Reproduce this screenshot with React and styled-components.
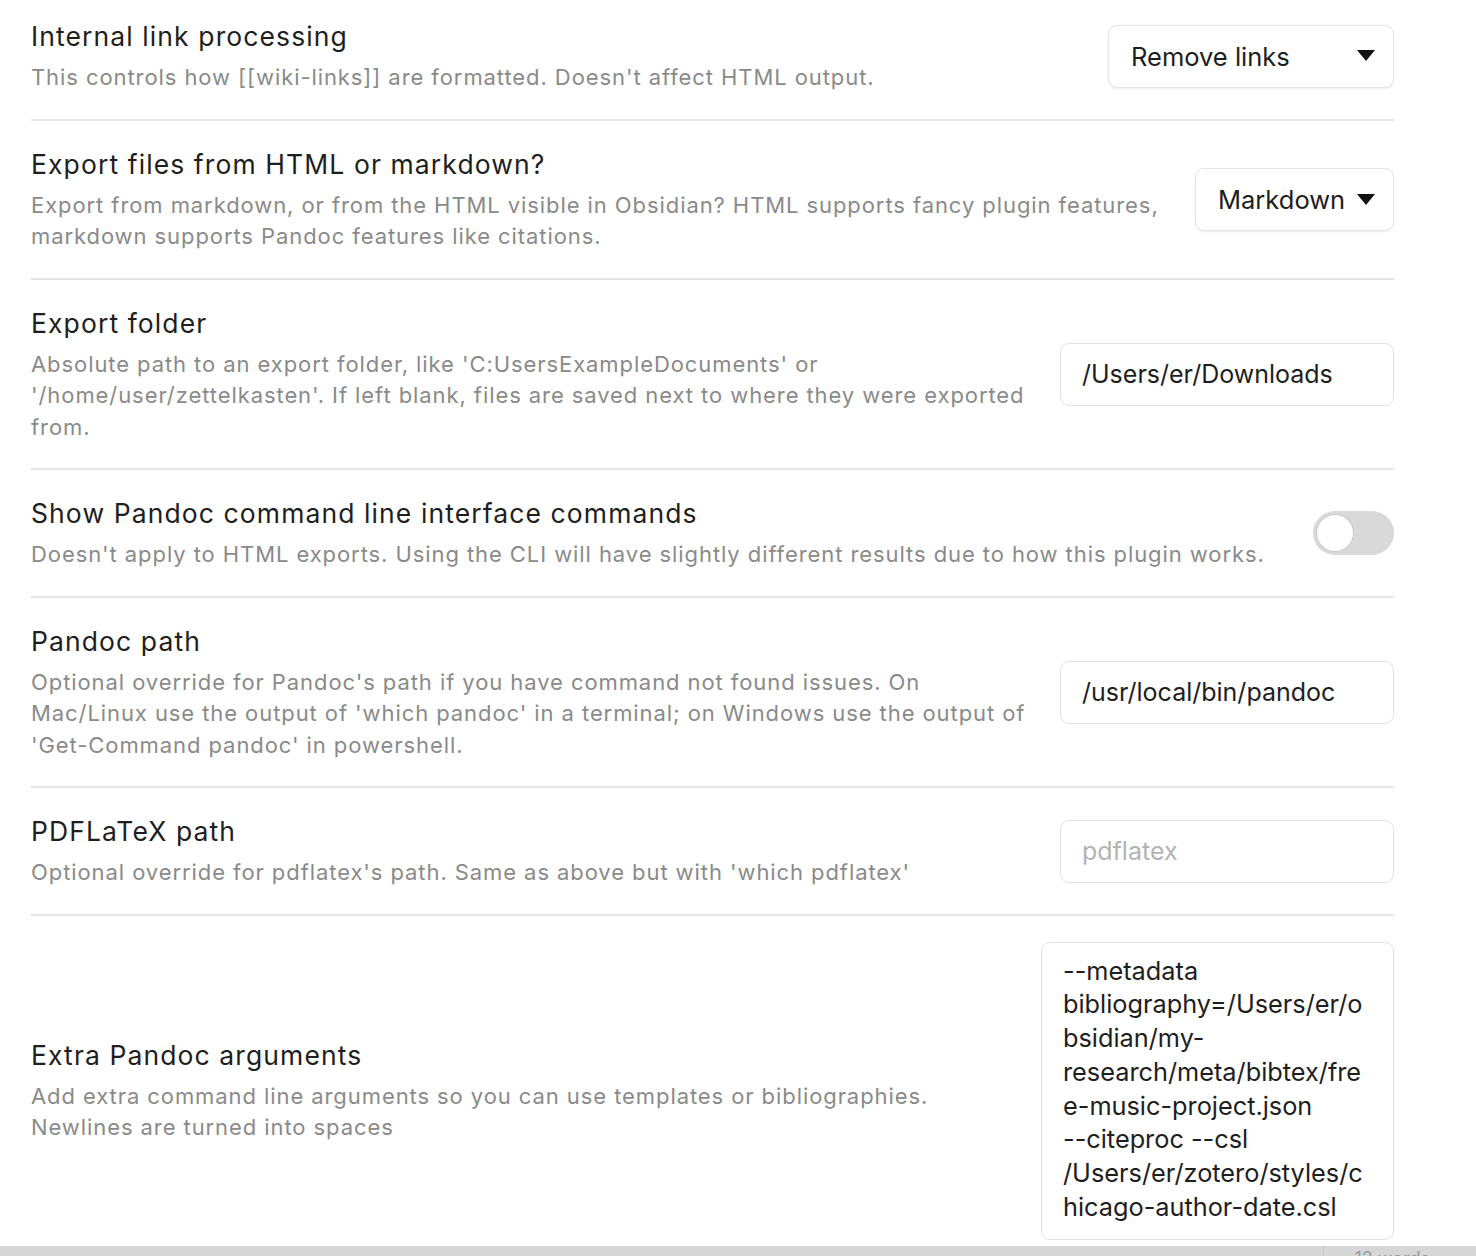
import React from 'react';
import styled, { createGlobalStyle } from 'styled-components';

const GlobalStyle = createGlobalStyle`
  html, body {
    margin: 0;
    padding: 0;
    background: #ffffff;
  }
  body {
    font-family: Inter, "Noto Sans", "Liberation Sans", sans-serif;
    color: #1f1f1f;
    -webkit-font-smoothing: antialiased;
  }
`;

const Page = styled.div`
  width: 1476px;
  height: 1256px;
  display: flex;
  flex-direction: column;
  overflow: hidden;
  background: #ffffff;
`;

const Content = styled.div`
  flex: 1;
  min-height: 0;
  overflow: hidden;
  padding: 0 82px 0 31px;
`;

const SettingItem = styled.div`
  display: flex;
  align-items: center;
  padding: 26px 0 25px;
  border-top: 2px solid #e6e6e6;

  &:first-child {
    border-top: none;
    padding-top: 19px;
  }
`;

const Info = styled.div`
  flex: 1 1 auto;
  min-width: 0;
  margin-right: 30px;
`;

const Name = styled.div`
  font-size: 26.5px;
  line-height: 34px;
  color: #1e1e1e;
  letter-spacing: 1.1px;
`;

const Description = styled.div`
  margin-top: 9px;
  font-size: 22px;
  line-height: 31.5px;
  color: #8a8a8a;
  letter-spacing: 0.92px;
  white-space: nowrap;
`;

const Control = styled.div`
  flex: 0 0 auto;
  display: flex;
  justify-content: flex-end;
`;

const Dropdown = styled.div`
  box-sizing: border-box;
  width: ${({ $width }) => $width}px;
  height: 63px;
  display: flex;
  align-items: center;
  justify-content: space-between;
  padding: 0 18px 0 22px;
  border: 1.5px solid #e4e4e4;
  border-radius: 9px;
  background: #ffffff;
  box-shadow: 0 1px 2px rgba(0, 0, 0, 0.08);
  font-size: 25.5px;
  color: #1e1e1e;
`;

const Caret = styled.svg`
  width: 18px;
  height: 11px;
  margin-top: -1px;
`;

const TextInput = styled.input`
  box-sizing: border-box;
  width: 334px;
  height: 63px;
  padding: 0 21px;
  border: 1.5px solid #e2e2e2;
  border-radius: 9px;
  background: #ffffff;
  font-family: inherit;
  font-size: 25px;
  color: #1e1e1e;
  outline: none;

  &::placeholder {
    color: #b3b3b3;
  }
`;

const Toggle = styled.div`
  box-sizing: border-box;
  width: 81px;
  height: 44px;
  border-radius: 22px;
  background: #d9d9d9;
  padding: 4px;
  display: flex;
  align-items: center;
  justify-content: ${({ $on }) => ($on ? 'flex-end' : 'flex-start')};
`;

const Knob = styled.div`
  width: 36px;
  height: 36px;
  border-radius: 50%;
  background: #ffffff;
  box-shadow: 0 0 0 1px rgba(0, 0, 0, 0.08);
`;

const TextArea = styled.textarea`
  box-sizing: border-box;
  width: 353px;
  height: 298px;
  padding: 11px 21px;
  border: 1.5px solid #e2e2e2;
  border-radius: 9px;
  background: #ffffff;
  font-family: inherit;
  font-size: 25.3px;
  line-height: 33.8px;
  color: #1e1e1e;
  white-space: pre;
  overflow: hidden;
  resize: none;
  outline: none;
`;

const StatusBar = styled.div`
  flex: 0 0 10px;
  height: 10px;
  background: #d6d6d6;
  display: flex;
  justify-content: flex-end;
  overflow: hidden;
`;

const StatusItem = styled.div`
  padding: 2px 46px 0 30px;
  font-size: 18px;
  line-height: 22px;
  color: #9a9a9a;
  border-left: 1px solid #cbcbcb;
`;

const Select = ({ value, width }) => (
  <Dropdown $width={width}>
    <span>{value}</span>
    <Caret viewBox="0 0 18 11">
      <path d="M0 0 H18 L9 11 Z" fill="#111" />
    </Caret>
  </Dropdown>
);

const Lines = ({ lines }) =>
  lines.map((line, i) => (
    <React.Fragment key={i}>
      {line}
      {i < lines.length - 1 && <br />}
    </React.Fragment>
  ));

const Setting = ({ name, desc, children }) => (
  <SettingItem>
    <Info>
      <Name>{name}</Name>
      <Description>
        <Lines lines={desc} />
      </Description>
    </Info>
    <Control>{children}</Control>
  </SettingItem>
);

const extraArgs = [
  '--metadata',
  'bibliography=/Users/er/o',
  'bsidian/my-',
  'research/meta/bibtex/fre',
  'e-music-project.json',
  '--citeproc --csl',
  '/Users/er/zotero/styles/c',
  'hicago-author-date.csl',
].join('\n');

const App = () => (
  <>
    <GlobalStyle />
    <Page>
      <Content>
        <Setting
          name="Internal link processing"
          desc={["This controls how [[wiki-links]] are formatted. Doesn't affect HTML output."]}
        >
          <Select value="Remove links" width={286} />
        </Setting>

        <Setting
          name="Export files from HTML or markdown?"
          desc={[
            'Export from markdown, or from the HTML visible in Obsidian? HTML supports fancy plugin features,',
            'markdown supports Pandoc features like citations.',
          ]}
        >
          <Select value="Markdown" width={199} />
        </Setting>

        <Setting
          name="Export folder"
          desc={[
            "Absolute path to an export folder, like 'C:UsersExampleDocuments' or",
            "'/home/user/zettelkasten'. If left blank, files are saved next to where they were exported",
            'from.',
          ]}
        >
          <TextInput defaultValue="/Users/er/Downloads" />
        </Setting>

        <Setting
          name="Show Pandoc command line interface commands"
          desc={["Doesn't apply to HTML exports. Using the CLI will have slightly different results due to how this plugin works."]}
        >
          <Toggle $on={false}>
            <Knob />
          </Toggle>
        </Setting>

        <Setting
          name="Pandoc path"
          desc={[
            "Optional override for Pandoc's path if you have command not found issues. On",
            "Mac/Linux use the output of 'which pandoc' in a terminal; on Windows use the output of",
            "'Get-Command pandoc' in powershell.",
          ]}
        >
          <TextInput defaultValue="/usr/local/bin/pandoc" />
        </Setting>

        <Setting
          name="PDFLaTeX path"
          desc={["Optional override for pdflatex's path. Same as above but with 'which pdflatex'"]}
        >
          <TextInput placeholder="pdflatex" />
        </Setting>

        <Setting
          name="Extra Pandoc arguments"
          desc={[
            'Add extra command line arguments so you can use templates or bibliographies.',
            'Newlines are turned into spaces',
          ]}
        >
          <TextArea defaultValue={extraArgs} />
        </Setting>
      </Content>
      <StatusBar>
        <StatusItem>12 words</StatusItem>
      </StatusBar>
    </Page>
  </>
);

export default App;
